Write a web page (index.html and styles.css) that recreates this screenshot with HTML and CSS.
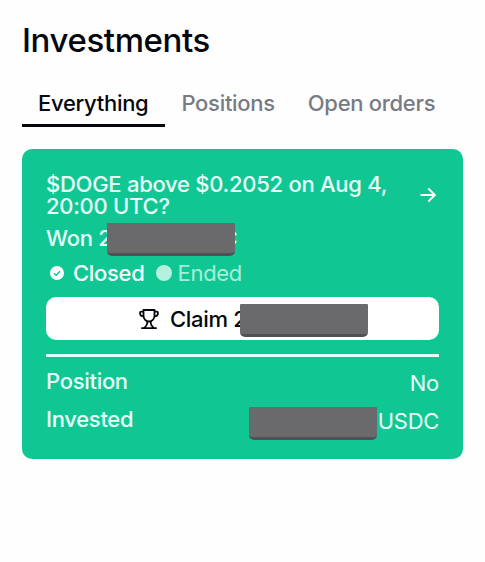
FILE: index.html
```html
<!DOCTYPE html>
<html lang="en">
<head>
    <meta charset="UTF-8">
    <meta name="viewport" content="width=device-width, initial-scale=1.0">
    <title>Investments</title>
    <link rel="stylesheet" href="styles.css">
</head>
<body>
    <h1>Investments</h1>

    <nav class="tabs">
        <a class="tab active">Everything</a>
        <a class="tab">Positions</a>
        <a class="tab">Open orders</a>
    </nav>

    <div class="card">
        <div class="card-header">
            <h2>$DOGE above $0.2052 on Aug 4, 20:00 UTC?</h2>
            <svg class="arrow" viewBox="0 0 16 16" fill="none" stroke="currentColor" stroke-width="1.9">
                <path d="M0.5 8H14.5M8.3 1.5L14.8 8L8.3 14.5"/>
            </svg>
        </div>

        <p class="won">Won 2<span class="masked"></span><span class="tail">C</span></p>

        <div class="status">
            <svg class="check" viewBox="0 0 14 14">
                <circle cx="7" cy="7" r="7" fill="#fff"/>
                <path d="M4 7.2L6.1 9.2L10 5.2" fill="none" stroke="#10c794" stroke-width="1.5"/>
            </svg>
            <span class="closed">Closed</span>
            <span class="dot"></span>
            <span class="ended">Ended</span>
        </div>

        <button class="claim">
            <svg class="trophy" viewBox="0 0 20 20" fill="none" stroke="currentColor" stroke-width="1.8" stroke-linejoin="round">
                <path d="M4.5 1H15.5V6.5C15.5 10 13 12.5 10 12.5S4.5 10 4.5 6.5Z"/>
                <path d="M4.5 2.6H2.4C1.4 2.6 1 3.1 1 4C1 6.2 2.4 7.3 4.8 7.3M15.5 2.6H17.6C18.6 2.6 19 3.1 19 4C19 6.2 17.6 7.3 15.2 7.3"/>
                <path d="M8.2 12.3C8.8 15 7.5 17 5 19M11.8 12.3C11.2 15 12.5 17 15 19M2.2 19.1H17.8"/>
            </svg>
            <span>Claim 2</span><span class="masked"></span>
        </button>

        <div class="details">
            <div class="row">
                <span class="label">Position</span>
                <span class="value">No</span>
            </div>
            <div class="row">
                <span class="label">Invested</span>
                <span class="value"><span class="masked"></span>USDC</span>
            </div>
        </div>
    </div>
</body>
</html>
```
FILE: styles.css
```css
* {
    box-sizing: border-box;
}
body {
    margin: 0;
    padding: 20px 22px 0;
    font-family: Inter, "Liberation Sans", sans-serif;
    font-size: 22px;
    font-weight: 500;
    letter-spacing: -0.3px;
    background: #fefefe;
    color: #05070d;
}
h1, h2, p {
    margin: 0;
}
h1 {
    font-size: 33px;
    font-weight: 500;
    line-height: 41px;
    letter-spacing: -0.4px;
}
.tabs {
    display: flex;
    margin-top: 19px;
}
.tab {
    height: 47px;
    padding: 0 17px 0 16px;
    line-height: 46px;
    color: #777b83;
    white-space: nowrap;
}
.tab.active {
    border-bottom: 3px solid #05070d;
    color: #05070d;
}
.card {
    height: 310px;
    margin-top: 22px;
    padding: 24px 24px 0;
    border-radius: 10px;
    background: #10c794;
    color: #e8fff8;
}
.card-header {
    display: flex;
    justify-content: space-between;
    align-items: center;
}
h2 {
    width: 350px;
    padding-top: 1px;
    font-size: 22px;
    font-weight: 500;
    line-height: 21.5px;
    letter-spacing: -0.27px;
}
.arrow {
    width: 16px;
    height: 16px;
    margin-right: 3px;
    color: #fff;
}
.masked {
    display: inline-block;
    flex: none;
    width: 128px;
    height: 33px;
    border-radius: 1px 1px 5px 5px;
    border-bottom: 3px solid #515057;
    background: #6a696b;
}
.won {
    display: flex;
    height: 33px;
    margin-top: 6px;
    line-height: 30px;
}
.won .masked {
    position: relative;
    margin-left: -4px;
}
.tail {
    margin-left: -14px;
}
.status {
    display: flex;
    align-items: center;
    height: 34px;
}
.check {
    width: 14px;
    height: 14px;
    margin: 0 9px 0 4px;
}
.closed {
    color: #f4fffc;
}
.dot {
    width: 16px;
    height: 16px;
    margin: 0 6px 0 11px;
    border-radius: 50%;
    background: #b5f0de;
}
.ended {
    color: #a8edd9;
    font-weight: 400;
}
.claim {
    display: flex;
    align-items: center;
    width: 100%;
    height: 43px;
    margin-top: 7px;
    padding: 0 0 0 93px;
    border: none;
    border-radius: 10px;
    background: #fff;
    color: #05070d;
    font: inherit;
    letter-spacing: inherit;
}
.trophy {
    width: 20px;
    height: 20px;
    margin-right: 11px;
}
.claim .masked {
    margin: 3px 0 0 -7px;
}
.details {
    margin-top: 14px;
    padding-top: 8px;
    border-top: 3px solid #e3fff6;
}
.row {
    display: flex;
    justify-content: space-between;
    height: 38px;
    line-height: 33px;
}
.value {
    display: flex;
    padding-top: 2px;
    font-weight: 400;
}
.value .masked {
    margin: 2px 1px 0 0;
}
```
